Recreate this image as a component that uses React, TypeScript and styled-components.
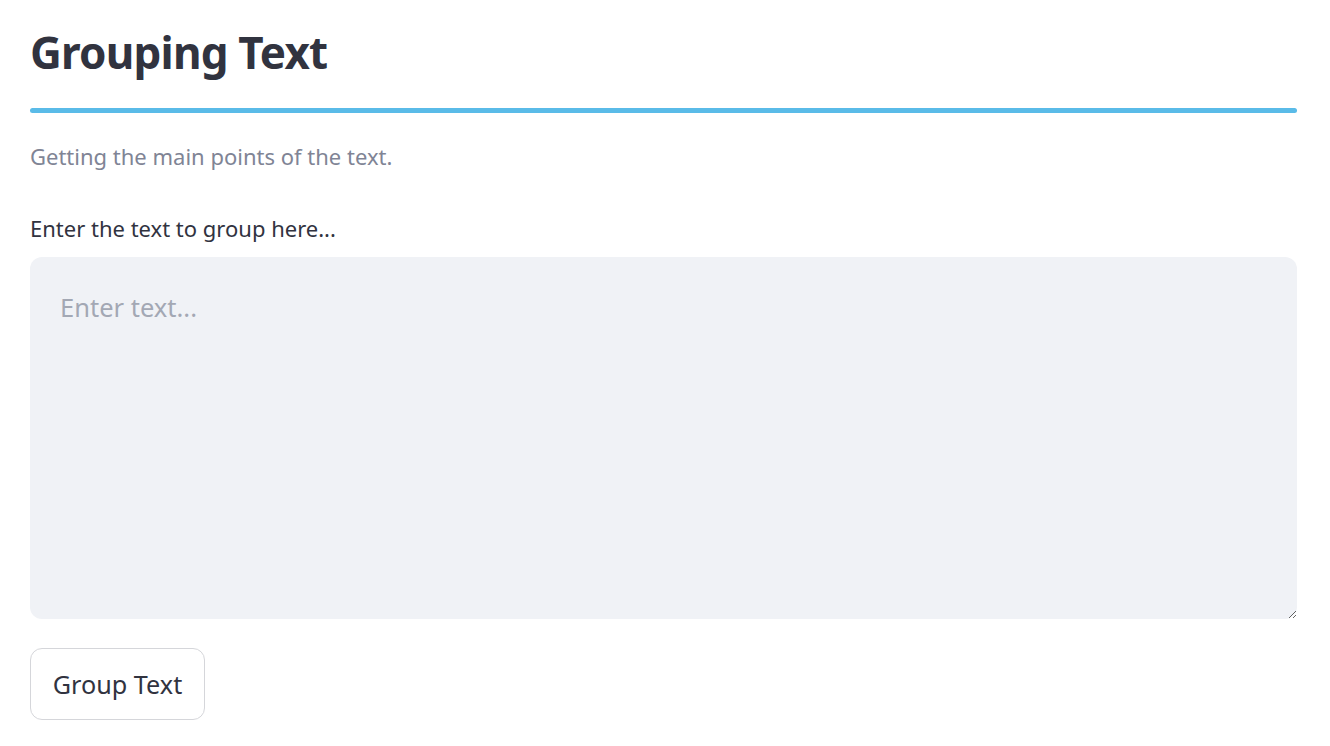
import React from "react";
import styled, { createGlobalStyle } from "styled-components";

const Global = createGlobalStyle`
  html, body { margin: 0; padding: 0; background: #ffffff; }
  body { font-family: "Noto Sans", "Liberation Sans", sans-serif; color: #31333f; }
`;

const Page = styled.main`
  display: flex;
  flex-direction: column;
  padding: 20px 33px 0 30px;
`;

const Title = styled.h1`
  margin: 0;
  font-size: 44px;
  font-weight: 700;
  line-height: 64px;
  color: #31333f;
  letter-spacing: -0.8px;
`;

const Divider = styled.hr`
  margin: 24px 0 0;
  border: none;
  height: 5px;
  border-radius: 3px;
  background: #5abbe8;
`;

const Caption = styled.p`
  margin: 27px 0 0;
  font-size: 22px;
  line-height: 32px;
  color: #808495;
`;

const Label = styled.label`
  margin-top: 40px;
  font-size: 22px;
  line-height: 32px;
  color: #31333f;
`;

const TextArea = styled.textarea`
  margin-top: 13px;
  height: 362px;
  box-sizing: border-box;
  border: none;
  outline: none;
  border-radius: 12px;
  background: #f0f2f6;
  padding: 31px 30px 27px;
  font-family: inherit;
  font-size: 25.5px;
  line-height: 38px;
  color: #31333f;
  resize: vertical;
  &::placeholder { color: #a3a8b4; }
`;

const Button = styled.button`
  margin-top: 29px;
  align-self: flex-start;
  height: 72px;
  width: 175px;
  padding: 0;
  background: #ffffff;
  border: 1px solid #d5d6da;
  border-radius: 12px;
  font-family: inherit;
  font-size: 25.2px;
  color: #31333f;
  cursor: pointer;
`;

export default function App() {
  return (
    <>
      <Global />
      <Page>
        <Title>Grouping Text</Title>
        <Divider />
        <Caption>Getting the main points of the text.</Caption>
        <Label htmlFor="txt">Enter the text to group here...</Label>
        <TextArea id="txt" placeholder="Enter text..." />
        <Button>Group Text</Button>
      </Page>
    </>
  );
}
